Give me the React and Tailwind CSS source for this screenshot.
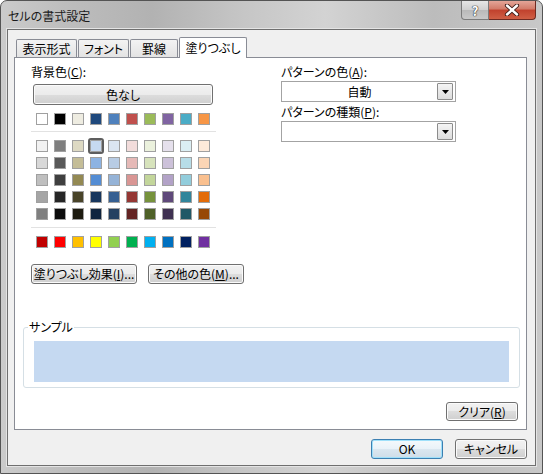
const basic = ["#FFFFFF", "#000000", "#EEECE1", "#1F497D", "#4F81BD", "#C0504D", "#9BBB59", "#8064A2", "#4BACC6", "#F79646"];

const theme = [
  ["#F2F2F2", "#7F7F7F", "#DDD9C3", "#C6D9F0", "#DBE5F1", "#F2DCDB", "#EBF1DD", "#E5E0EC", "#DBEEF3", "#FDEADA"],
  ["#D8D8D8", "#595959", "#C4BD97", "#8DB3E2", "#B8CCE4", "#E5B9B7", "#D7E3BC", "#CCC1D9", "#B7DDE8", "#FBD5B5"],
  ["#BFBFBF", "#3F3F3F", "#938953", "#548DD4", "#95B3D7", "#D99694", "#C3D69B", "#B2A2C7", "#92CDDC", "#FAC08F"],
  ["#A5A5A5", "#262626", "#494429", "#17365D", "#366092", "#953734", "#76923C", "#5F497A", "#31859B", "#E36C09"],
  ["#7F7F7F", "#0C0C0C", "#1D1B10", "#0F243E", "#244061", "#632423", "#4F6128", "#3F3151", "#205867", "#974806"],
];

const standard = ["#C00000", "#FF0000", "#FFC000", "#FFFF00", "#92D050", "#00B050", "#00B0F0", "#0070C0", "#002060", "#7030A0"];

const tabs = [
  { label: "表示形式", w: "w-[61px]" },
  { label: "フォント", w: "w-[51px]" },
  { label: "罫線", w: "w-[48px]" },
];

function Swatch({ color, selected }) {
  return (
    <div
      className={`h-[12px] w-[12px] border border-[#a0a0a0] ${
        selected ? "rounded-[1px] outline-2 outline-[#5e5e5e]" : ""
      }`}
      style={{ backgroundColor: color }}
    />
  );
}

function Btn({ children, className = "", primary = false }) {
  return (
    <div
      className={`flex items-center justify-center whitespace-nowrap rounded-[3px] border text-[12px] leading-[14px] ${
        primary
          ? "border-[#3c7fb1] shadow-[inset_0_0_0_1px_#9fe0fa] bg-[linear-gradient(#f4f9fc_0%,#e9f2f8_50%,#dbe7f0_50%,#cfdde8_100%)]"
          : "border-[#707070] shadow-[inset_0_0_0_1px_#fbfbfb] bg-[linear-gradient(#f2f2f2_0%,#ebebeb_50%,#dddddd_50%,#cfcfcf_100%)]"
      } ${className}`}
    >
      {children}
    </div>
  );
}

function Combo({ value }) {
  return (
    <div className="mt-[2px] flex h-[21px] w-[175px] items-center border border-[#a3a3a3] bg-white pr-[2px]">
      <div className="flex-1 text-center leading-[14px]">{value}</div>
      <div className="flex h-[17px] w-[16px] items-center justify-center rounded-[1px] border border-[#8c8c8c] bg-[linear-gradient(#f4f4f4,#dcdcdc)]">
        <svg width="7" height="4" viewBox="0 0 7 4">
          <path d="M0 0h7L3.5 4z" fill="#000" />
        </svg>
      </div>
    </div>
  );
}

export default function App() {
  return (
    <div className="h-[474px] w-[543px] overflow-hidden font-['Noto_Sans_CJK_JP',sans-serif] text-[12px] text-black [font-feature-settings:'palt']">
      <div className="flex h-full flex-col rounded-t-[7px] border border-[#545454] bg-[linear-gradient(90deg,#cbcbcb_0%,#bdbdbd_12%,#b2b2b2_28%,#c6c6c6_45%,#d3d3d3_60%,#bcbcbc_80%,#c8c8c8_100%)]">
        {/* title bar */}
        <div className="flex h-[28px] shrink-0 items-start justify-between pr-[6px]">
          <div className="pl-[7px] pt-[8px] text-[12px] leading-[14px] text-[#1a1a1a]">セルの書式設定</div>
          <div className="flex">
            <div className="flex h-[19px] w-[28px] items-center justify-center rounded-bl-[4px] border border-t-0 border-[#7b7b7b] bg-[linear-gradient(#e6e6e6_0%,#d0d0d0_50%,#b9b9b9_50%,#c9c9c9_100%)] text-[13px] font-bold leading-none text-white [text-shadow:0_0_1px_#333,0_0_1px_#333,0_0_1px_#333]">
              ?
            </div>
            <div className="flex h-[19px] w-[47px] items-center justify-center rounded-br-[4px] border border-l-0 border-t-0 border-[#6e2a22] bg-[linear-gradient(#e4a598_0%,#d27a68_45%,#c1412d_50%,#cf5f45_100%)]">
              <svg width="16" height="12" viewBox="0 0 16 12">
                <path d="M3 1.5l10 9M13 1.5l-10 9" stroke="#3a1a16" strokeWidth="4.2" strokeLinecap="round" />
                <path d="M3 1.5l10 9M13 1.5l-10 9" stroke="#ffffff" strokeWidth="2.4" strokeLinecap="round" />
              </svg>
            </div>
          </div>
        </div>

        {/* client area */}
        <div className="mx-[6px] mb-[7px] flex flex-1 flex-col border border-[#6f6f6f] bg-[#f0f0f0] pt-[7px] shadow-[0_0_0_1px_#e4e4e4]">
          {/* tabs */}
          <div className="ml-[8px] flex h-[20px] items-end gap-[1px]">
            {tabs.map((t) => (
              <div
                key={t.label}
                className={`flex h-[18px] ${t.w} items-center justify-center rounded-t-[2px] border border-b-0 border-[#898c95] bg-[linear-gradient(#f3f3f3,#e3e3e3)] leading-[14px]`}
              >
                {t.label}
              </div>
            ))}
            <div className="relative z-10 -mb-px flex h-[21px] w-[68px] items-center justify-center rounded-t-[2px] border border-b-0 border-[#898c95] bg-white leading-[14px]">
              塗りつぶし
            </div>
          </div>

          {/* panel */}
          <div className="ml-[6px] flex h-[373px] w-[513px] flex-col border border-[#898c95] bg-white pt-[7px]">
            <div className="flex">
              {/* left column */}
              <div className="flex w-[266px] flex-col pl-[16px]">
                <div className="h-[14px] leading-[14px]">
                  背景色(<u>C</u>):
                </div>
                <Btn className="ml-[2px] mt-[5px] h-[21px] w-[180px]">色なし</Btn>
                <div className="mt-[8px] flex gap-[6px] pl-[5px]">
                  {basic.map((c) => (
                    <Swatch key={c} color={c} />
                  ))}
                </div>
                <div className="mt-[6px] h-px w-[185px] bg-[#e2e2e2]" />
                <div className="mt-[8px] flex flex-col gap-[5px] pl-[5px]">
                  {theme.map((row, r) => (
                    <div key={r} className="flex gap-[6px]">
                      {row.map((c, i) => (
                        <Swatch key={i} color={c} selected={r === 0 && i === 3} />
                      ))}
                    </div>
                  ))}
                </div>
                <div className="mt-[7px] h-px w-[185px] bg-[#e2e2e2]" />
                <div className="mt-[8px] flex gap-[6px] pl-[5px]">
                  {standard.map((c) => (
                    <Swatch key={c} color={c} />
                  ))}
                </div>
                <div className="mt-[16px] flex gap-[11px]">
                  <Btn className="h-[20px] w-[106px]">
                    塗りつぶし効果(<u>I</u>)...
                  </Btn>
                  <Btn className="h-[20px] w-[96px]">
                    その他の色(<u>M</u>)...
                  </Btn>
                </div>
              </div>

              {/* right column */}
              <div className="flex flex-col">
                <div className="h-[14px] leading-[14px]">
                  パターンの色(<u>A</u>):
                </div>
                <Combo value="自動" />
                <div className="mt-[3px] h-[14px] leading-[14px]">
                  パターンの種類(<u>P</u>):
                </div>
                <Combo value="" />
              </div>
            </div>

            {/* sample */}
            <div className="relative ml-[8px] mt-[43px] h-[61px] w-[497px] rounded-[3px] border border-[#d5dfe5] pl-[10px] pt-[13px]">
              <div className="absolute -top-[8px] left-[4px] bg-white px-[1px] leading-[14px]">サンプル</div>
              <div className="h-[41px] w-[475px] bg-[#c5d9f1]" />
            </div>

            <div className="mr-[8px] mt-[14px] flex justify-end">
              <Btn className="h-[19px] w-[72px]">
                クリア(<u>R</u>)
              </Btn>
            </div>
          </div>

          {/* dialog buttons */}
          <div className="mt-[9px] flex justify-end gap-[12px] pr-[8px]">
            <Btn primary className="h-[20px] w-[72px]">
              OK
            </Btn>
            <Btn className="h-[20px] w-[72px]">キャンセル</Btn>
          </div>
        </div>
      </div>
    </div>
  );
}
